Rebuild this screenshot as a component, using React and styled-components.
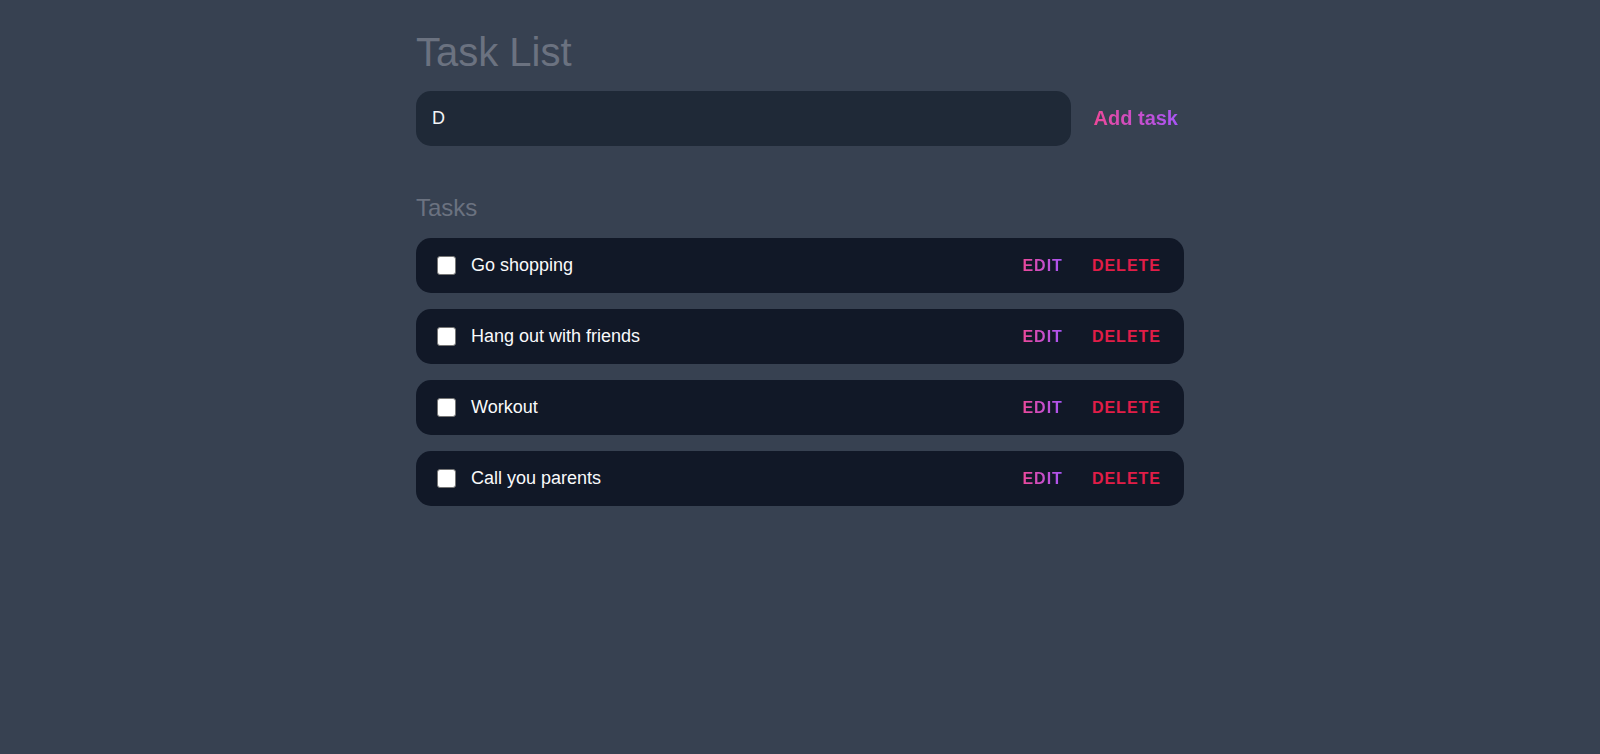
import styled, { createGlobalStyle } from "styled-components";

const tasks = ["Go shopping", "Hang out with friends", "Workout", "Call you parents"];

const GlobalStyle = createGlobalStyle`
  body {
    margin: 0;
    background-color: #374151;
    font-family: "Liberation Sans", Arial, sans-serif;
  }
`;

const App = () => {
  return (
    <Page>
      <GlobalStyle />
      <Container>
        <Title>Task List</Title>
        <Form onSubmit={(e) => e.preventDefault()}>
          <Input type="text" defaultValue="D" />
          <AddBtn type="submit">Add task</AddBtn>
        </Form>
        <Heading>Tasks</Heading>
        <List>
          {tasks.map((task) => (
            <Row key={task}>
              <Check type="checkbox" />
              <TaskText>{task}</TaskText>
              <Actions>
                <EditBtn>Edit</EditBtn>
                <DeleteBtn>Delete</DeleteBtn>
              </Actions>
            </Row>
          ))}
        </List>
      </Container>
    </Page>
  );
};

const Page = styled.div`
  min-height: 100vh;
  background-color: #374151;
`;

const Container = styled.div`
  width: 768px;
  margin: 0 auto;
  padding-top: 29px;
`;

const Title = styled.h1`
  margin: 0;
  font-size: 40px;
  font-weight: 400;
  color: #6b7280;
  line-height: 46px;
`;

const Form = styled.form`
  display: flex;
  align-items: center;
  gap: 17px;
  margin-top: 16px;
`;

const Input = styled.input`
  flex: 1;
  height: 55px;
  box-sizing: border-box;
  padding: 0 16px;
  border: none;
  outline: none;
  border-radius: 15px;
  background-color: #1f2937;
  color: #f3f4f6;
  font-family: inherit;
  font-size: 18px;
`;

const GradientText = styled.button`
  background: linear-gradient(to right, #ec4899, #a855f7);
  -webkit-background-clip: text;
  background-clip: text;
  color: transparent;
  border: none;
  cursor: pointer;
  font-family: inherit;
  font-weight: 700;
`;

const AddBtn = styled(GradientText)`
  padding: 0 6px;
  font-size: 20px;
  background-origin: content-box;
`;

const Heading = styled.h2`
  margin: 48px 0 0;
  font-size: 24px;
  font-weight: 400;
  color: #6b7280;
  line-height: 27px;
`;

const List = styled.div`
  display: flex;
  flex-direction: column;
  gap: 16px;
  margin-top: 17px;
`;

const Row = styled.div`
  display: flex;
  align-items: center;
  height: 55px;
  padding: 0 23px 0 21px;
  border-radius: 15px;
  background-color: #111827;
`;

const Check = styled.input`
  appearance: none;
  width: 19px;
  height: 19px;
  margin: 0;
  border: 1px solid #767676;
  border-radius: 3px;
  background-color: #ffffff;
  box-sizing: border-box;
`;

const TaskText = styled.span`
  flex: 1;
  margin-left: 15px;
  font-size: 18px;
  color: #f9fafb;
`;

const Actions = styled.div`
  display: flex;
  align-items: center;
  gap: 29px;
`;

const EditBtn = styled(GradientText)`
  padding: 0;
  font-size: 16px;
  text-transform: uppercase;
  letter-spacing: 1px;
`;

const DeleteBtn = styled.button`
  padding: 0;
  background: transparent;
  border: none;
  cursor: pointer;
  color: #e11d48;
  font-family: inherit;
  font-size: 16px;
  font-weight: 700;
  text-transform: uppercase;
  letter-spacing: 1px;
`;

export default App;
